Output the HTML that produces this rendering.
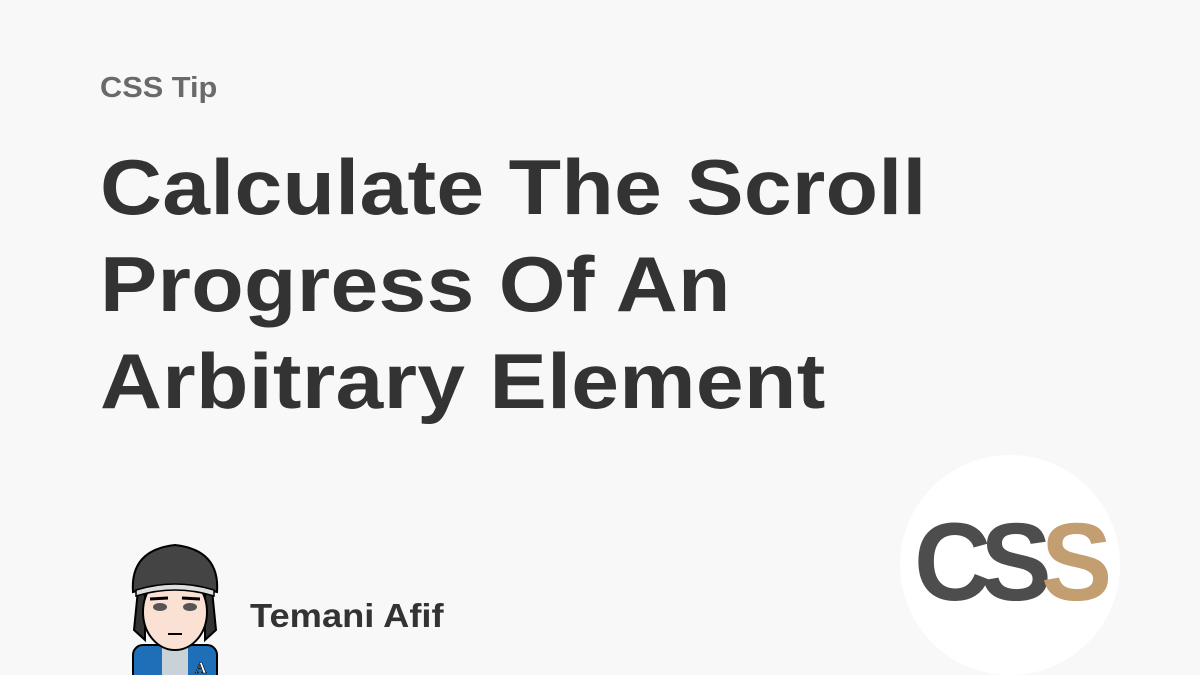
<!DOCTYPE html>
<html><head><meta charset="utf-8"><style>
html,body{margin:0;padding:0}
body{width:1200px;height:675px;background:#f8f8f8;position:relative;overflow:hidden;font-family:"Liberation Sans",sans-serif}
.tip{position:absolute;left:100px;top:72px;font-size:29px;font-weight:bold;color:#6a6a6a;transform:scaleX(1.06);transform-origin:left}
.title{position:absolute;left:100px;top:139px;font-size:78px;line-height:97px;font-weight:bold;color:#333;letter-spacing:0.3px;transform:scaleX(1.1);transform-origin:left;white-space:nowrap}
.name{position:absolute;left:250px;top:597px;font-size:33px;font-weight:bold;color:#333;transform:scaleX(1.1);transform-origin:left;white-space:nowrap}
.circle{position:absolute;left:900px;top:455px;width:220px;height:220px;border-radius:50%;background:#fff}
</style></head><body>
<div class="tip">CSS Tip</div>
<div class="title">Calculate The Scroll<br>Progress Of An<br>Arbitrary Element</div>
<svg style="position:absolute;left:100px;top:530px" width="150" height="145" viewBox="0 0 150 145">
 <rect x="33" y="115" width="84" height="40" rx="10" fill="#1e6fb8" stroke="#000" stroke-width="2"/>
 <rect x="62" y="115" width="26" height="40" fill="#c8d2d8"/>
 <path d="M38 60 L34 100 L45 110 L45 65Z M112 60 L116 100 L105 110 L105 65Z" fill="#333" stroke="#000" stroke-width="2"/>
 <ellipse cx="75" cy="82" rx="32" ry="38" fill="#fbe1d3" stroke="#000" stroke-width="2"/>
 <path d="M33 62 Q30 20 75 15 Q120 20 117 62 Q75 50 33 62Z" fill="#444" stroke="#000" stroke-width="2"/>
 <path d="M36 60 Q75 48 114 60 L114 66 Q75 54 36 66Z" fill="#ddd" stroke="#000" stroke-width="1.5"/>
 <ellipse cx="60" cy="77" rx="7" ry="4" fill="#555"/>
 <ellipse cx="90" cy="77" rx="7" ry="4" fill="#555"/>
 <path d="M50 69 L68 68 M82 68 L100 69" stroke="#000" stroke-width="3"/>
 <path d="M68 104 L82 104" stroke="#000" stroke-width="2"/>
 <text x="95" y="143" font-size="16" font-weight="bold" fill="#fff" stroke="#000" stroke-width="0.6" font-family="Liberation Serif,serif">A</text>
</svg>
<div class="name">Temani Afif</div>
<div class="circle"></div>
<div style="position:absolute;left:914px;top:507px;font-family:'Liberation Sans',sans-serif;font-size:120px;line-height:120px;font-weight:bold;letter-spacing:-12px;color:#4d4d4d;transform:scale(0.89,0.92);transform-origin:top left;white-space:nowrap">CS<span style="color:#c29e70">S</span></div>
</body></html>
